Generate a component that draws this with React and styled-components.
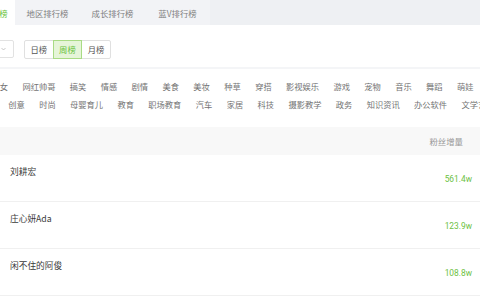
import React from "react";
import styled, { createGlobalStyle } from "styled-components";

const GlobalStyle = createGlobalStyle`
  html, body {
    margin: 0;
    padding: 0;
    background: #fff;
  }
  body {
    font-family: "Noto Sans CJK SC", "Noto Sans", sans-serif;
  }
`;

const GREEN = "#67c23a";

const Page = styled.div`
  width: 480px;
  height: 300px;
  overflow: hidden;
  background: #fff;
`;

const TabBar = styled.div`
  display: flex;
  height: 25px;
  background: #eef0f3;
  margin-left: -50px;
`;

const Tab = styled.div`
  width: 65px;
  display: flex;
  align-items: center;
  justify-content: center;
  font-size: 8.4px;
  color: ${(p) => (p.$active ? GREEN : "#808080")};
  background: ${(p) => (p.$active ? "#fff" : "#f2f3f6")};
  white-space: nowrap;
`;

const Toolbar = styled.div`
  display: flex;
  align-items: center;
  gap: 10px;
  padding: 15px 0 8px;
  border-bottom: 2px solid #f4f5f7;
`;

const Select = styled.div`
  width: 40px;
  height: 18px;
  margin-left: -26px;
  box-sizing: border-box;
  border: 1px solid #e2e2e2;
  border-radius: 2px;
  display: flex;
  align-items: center;
  justify-content: flex-end;
  padding-right: 7px;
  color: #aaa;
`;

const ButtonGroup = styled.div`
  display: flex;
`;

const SegButton = styled.div`
  height: 18.5px;
  box-sizing: border-box;
  padding: 0 5.5px;
  display: flex;
  align-items: center;
  font-size: 8.3px;
  color: ${(p) => (p.$active ? GREEN : "#555")};
  background: ${(p) => (p.$active ? "#e6f5d9" : "#fff")};
  border: 1px solid ${(p) => (p.$active ? "#a9db85" : "#e0e0e0")};
  margin-left: -1px;
  position: relative;
  z-index: ${(p) => (p.$active ? 1 : 0)};
  &:first-child {
    border-radius: 2px 0 0 2px;
    margin-left: 0;
  }
  &:last-child {
    border-radius: 0 2px 2px 0;
  }
`;

const Categories = styled.div`
  padding-top: 8px;
`;

const CategoryRow = styled.div`
  display: flex;
  gap: 14.4px;
  height: 18px;
  align-items: center;
  margin-left: ${(p) => p.$offset}px;
  white-space: nowrap;
`;

const Category = styled.span`
  font-size: 8.25px;
  color: #737373;
  flex: none;
`;

const TableHeader = styled.div`
  margin-top: 14px;
  height: 28px;
  background: #f8f8f8;
  display: flex;
  align-items: center;
  justify-content: flex-end;
  padding-right: 17px;
  font-size: 8.4px;
  color: #999;
`;

const Row = styled.div`
  height: 46px;
  border-bottom: 1px solid #f0f0f0;
  display: flex;
  justify-content: space-between;
  padding: 0 8px 0 10px;
`;

const Name = styled.div`
  padding-top: 10px;
  font-size: 8.7px;
  color: #3a3a3a;
`;

const Value = styled.div`
  align-self: center;
  margin-top: 3px;
  font-family: "Roboto", "Noto Sans", sans-serif;
  font-size: 8.4px;
  color: #6cbf43;
`;

const row1 = ["美女", "网红帅哥", "搞笑", "情感", "剧情", "美食", "美妆", "种草", "穿搭", "影视娱乐", "游戏", "宠物", "音乐", "舞蹈", "萌娃"];
const row2 = ["创意", "时尚", "母婴育儿", "教育", "职场教育", "汽车", "家居", "科技", "摄影教学", "政务", "知识资讯", "办公软件", "文学艺术"];

const rows = [
  { name: "刘耕宏", value: "561.4w" },
  { name: "庄心妍Ada", value: "123.9w" },
  { name: "闲不住的阿俊", value: "108.8w" },
];

const Chevron = () => (
  <svg width="5" height="4" viewBox="0 0 10 6" fill="none">
    <path d="M1 1l4 4 4-4" stroke="currentColor" strokeWidth="1.3" />
  </svg>
);

export default function App() {
  return (
    <Page>
      <GlobalStyle />
      <TabBar>
        <Tab $active>达人总排行榜</Tab>
        <Tab>地区排行榜</Tab>
        <Tab>成长排行榜</Tab>
        <Tab>蓝V排行榜</Tab>
      </TabBar>
      <Toolbar>
        <Select>
          <Chevron />
        </Select>
        <ButtonGroup>
          <SegButton>日榜</SegButton>
          <SegButton $active>周榜</SegButton>
          <SegButton>月榜</SegButton>
        </ButtonGroup>
      </Toolbar>
      <Categories>
        <CategoryRow $offset={-8.5}>
          {row1.map((c) => (
            <Category key={c}>{c}</Category>
          ))}
        </CategoryRow>
        <CategoryRow $offset={8.3}>
          {row2.map((c) => (
            <Category key={c}>{c}</Category>
          ))}
        </CategoryRow>
      </Categories>
      <TableHeader>粉丝增量</TableHeader>
      {rows.map((r) => (
        <Row key={r.name}>
          <Name>{r.name}</Name>
          <Value>{r.value}</Value>
        </Row>
      ))}
    </Page>
  );
}
